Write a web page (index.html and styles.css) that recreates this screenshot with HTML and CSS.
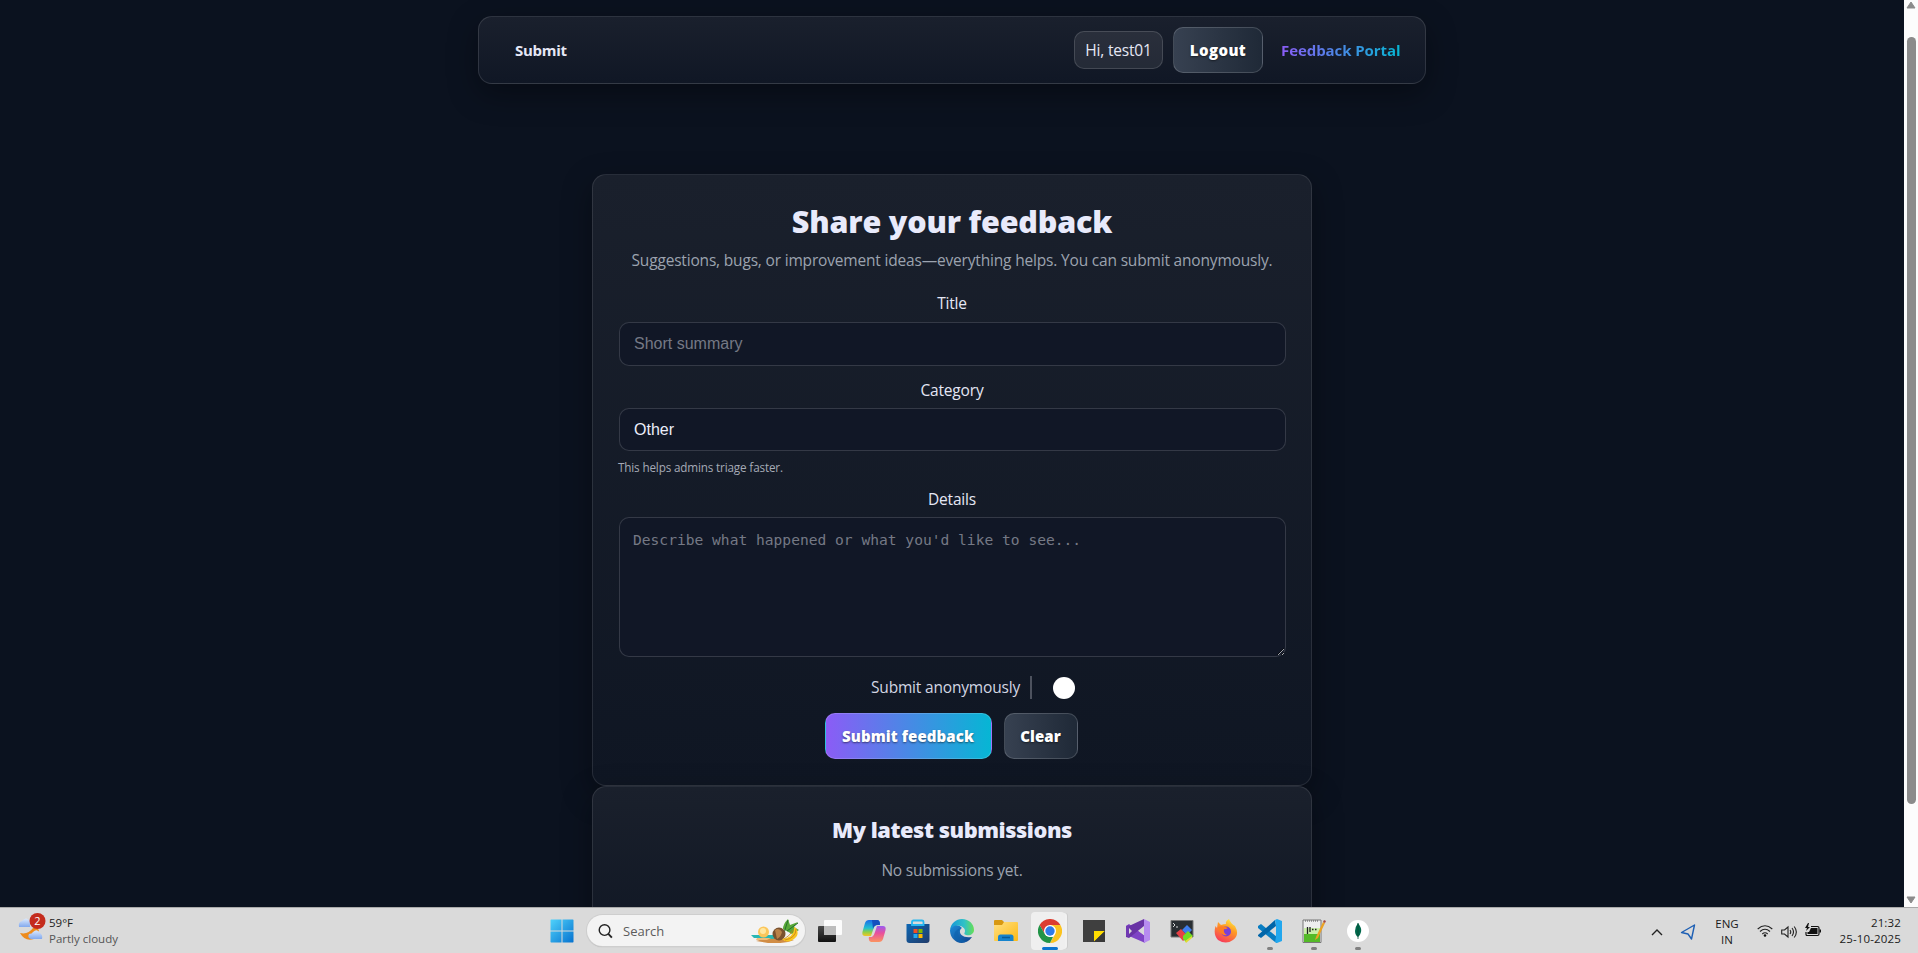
FILE: index.html
```html
<!DOCTYPE html>
<html lang="en">
<head>
<meta charset="utf-8">
<title>Feedback Portal</title>
<link rel="stylesheet" href="styles.css">
</head>
<body>
<div class="viewport">
  <div class="page">
    <nav class="nav">
      <a class="nav-link">Submit</a>
      <div class="nav-right">
        <span class="pill">Hi, test01</span>
        <button class="btn secondary logout">Logout</button>
        <a class="brand">Feedback Portal</a>
      </div>
    </nav>
    <main class="main">
      <section class="card form-card">
        <h1 class="heading">Share your feedback</h1>
        <p class="subtitle">Suggestions, bugs, or improvement ideas—everything helps. You can submit anonymously.</p>
        <label class="label l-title">Title</label>
        <input class="field" placeholder="Short summary">
        <label class="label l-category">Category</label>
        <div class="field select">Other</div>
        <p class="hint">This helps admins triage faster.</p>
        <label class="label l-details">Details</label>
        <textarea class="field area" placeholder="Describe what happened or what you'd like to see..."></textarea>
        <div class="anon"><span class="anon-text">Submit anonymously</span><span class="divider"></span><span class="knob"></span></div>
        <div class="actions"><button class="btn primary">Submit feedback</button><button class="btn secondary clear">Clear</button></div>
      </section>
      <section class="card list-card">
        <h2 class="subheading">My latest submissions</h2>
        <p class="empty">No submissions yet.</p>
      </section>
    </main>
  </div>
  <div class="scrollbar">
    <svg class="arrow" viewBox="0 0 10 8"><path d="M5 1 9 7H1z" fill="#8b8b8b" stroke="#8b8b8b" stroke-linejoin="round"/></svg>
    <span class="thumb"></span>
    <svg class="arrow" viewBox="0 0 10 8"><path d="M5 7 9 1H1z" fill="#8b8b8b" stroke="#8b8b8b" stroke-linejoin="round"/></svg>
  </div>
</div>
<footer class="taskbar">
  <div class="weather">
    <svg class="weather-icon" viewBox="0 0 28 30">
      <defs><linearGradient id="cl" x2="0" y2="1"><stop stop-color="#dce9fc"/><stop offset="1" stop-color="#82a9ee"/></linearGradient></defs>
      <path d="M4 14H1Q0 9 4 8Q8 3 12 8V14z" fill="url(#cl)"/>
      <path d="M2 20Q10 22 15 15Q20 14 21 18L16 26Q7 29 2 20z" fill="#ee8b1c"/>
      <path d="M13 26Q9 25 11 21Q14 21 15 19Q19 15 22 20Q25 22 24 26z" fill="url(#cl)"/>
      <circle cx="19.500" cy="8" r="8" fill="#c42b1c"/>
      <text x="19.500" y="12" text-anchor="middle" class="badge-num">2</text>
    </svg>
    <div class="weather-text"><span class="temp">59°F</span><span class="cond">Partly cloudy</span></div>
  </div>
  <div class="center">
    <div class="app start">
      <svg viewBox="0 0 24 24"><defs><linearGradient id="win" x2="1" y2="1"><stop stop-color="#4fd2fb"/><stop offset="1" stop-color="#0672cf"/></linearGradient></defs><path fill="url(#win)" d="M1 .5H11.500V11.500H.5V1zM12.500 .5H23L23.500 1V11.500H12.500zM.5 12.500H11.500V23.500H1L.5 23zM12.500 12.500H23.500V23L23 23.500H12.500z"/></svg>
    </div>
    <div class="search">
      <svg class="lens" viewBox="0 0 16 16"><circle cx="7" cy="7" r="5.700" fill="none" stroke="#222" stroke-width="1.500"/><path d="m11 11 3.800 4" stroke="#222" stroke-width="2"/></svg>
      <span class="search-text">Search</span>
      <svg class="fruit" viewBox="0 0 50 24">
        <path d="M0 16H24L28 22H12L15 19H3z" fill="#29b7b4"/>
        <circle cx="12.500" cy="13" r="5.500" fill="#fbc65b"/><circle cx="12" cy="12" r="3" fill="#ffe7a0"/>
        <path d="M5 22Q18 18 43 21Q34 25 17 24z" fill="#d18d45"/><path d="M6 19H20L16 21H5z" fill="#efbd78"/>
        <path d="M32 10Q32 5 37 0L39 6 47 3 43 8 48 11 41 15z" fill="#58a838"/><path d="m33 14 4-13M36 12 47 4" stroke="#25712c"/>
        <circle cx="28" cy="15" r="6.500" fill="#79512e"/><path d="M24 11Q28 8 31 13Q30 18 26 20" fill="#b98148"/>
        <path d="M43 8Q44 18 31 20Q36 25 43 20Q49 16 45 9z" fill="#f8c421"/><path d="M45 10Q45 19 34 21M42 11Q39 17 33 20" fill="none" stroke="#c68213" stroke-width=".8"/>
      </svg>
    </div>
    <div class="app"><svg viewBox="0 0 24 24"><defs><linearGradient id="tv" x2="0" y2="1"><stop stop-color="#494949"/><stop offset="1" stop-color="#111"/></linearGradient></defs><rect y="7" width="18" height="16" rx="1" fill="url(#tv)"/><rect x="6" y="1" width="18" height="15" rx="1" fill="#fff" opacity=".9"/><path d="M6 7H18V16H6z" fill="#bdbdbd"/></svg></div>
    <div class="app"><svg viewBox="0 0 24 24">
      <defs><linearGradient id="ca" x2="0" y2="1"><stop stop-color="#1b6be8"/><stop offset=".5" stop-color="#21bfd2"/><stop offset=".75" stop-color="#8fd048"/><stop offset="1" stop-color="#f4c425"/></linearGradient><linearGradient id="cb" x2="0" y2="1"><stop stop-color="#9a5bf0"/><stop offset=".45" stop-color="#e9509c"/><stop offset="1" stop-color="#fb9460"/></linearGradient></defs>
      <path d="M7 1H15Q18 1 18 5L14 6Q12 7 11 11L9 17H3Q-1 17 1 11L3 4Q4 1 7 1z" fill="url(#ca)"/>
      <path d="M17 23H9Q6 22 7 18L10 18Q12 17 13 13L15 7H21Q25 7 23 13L21 20Q20 23 17 23z" fill="url(#cb)"/><path d="M10 1H15Q18 1 18 6H16Q12 6 11 10z" fill="#1550be"/></svg></div>
    <div class="app"><svg viewBox="0 0 24 24"><defs><linearGradient id="st" x2="1" y2="1"><stop stop-color="#0c67b4"/><stop offset="1" stop-color="#213b69"/></linearGradient></defs><path d="M.5 5H23.500V21Q23.500 24 20.500 24H3.500Q.5 24 .5 21z" fill="url(#st)"/><path d="M6 6V3Q6 1.500 7.500 1.500H16Q17.500 1.500 17.500 3V6z" fill="none" stroke="#27b8f0" stroke-width="1.800"/><path d="M7.500 10H11.500V14H7.500z" fill="#f25022"/><path d="M12.500 10H16.500V14H12.500z" fill="#7fba00"/><path d="M7.500 15H11.500V19H7.500z" fill="#20a9ef"/><path d="M12.500 15H16.500V19H12.500z" fill="#ffb900"/></svg></div>
    <div class="app"><svg viewBox="0 0 24 24"><defs><linearGradient id="ed" x2="1"><stop stop-color="#1597d8"/><stop offset=".6" stop-color="#2fc1c6"/><stop offset="1" stop-color="#67df54"/></linearGradient><linearGradient id="ee" x2="1" y2="1"><stop stop-color="#1c8bd8"/><stop offset="1" stop-color="#123f88"/></linearGradient></defs><path d="M0 11C1 4 6 0 12 0C19 0 24 5 24 11C24 15 20 17 16 16C13 15 15 14 15 12C15 8 10 6 6 7Q2 8 0 11z" fill="url(#ed)"/><path d="M0 11C2 6 9 5 12 9C8 11 9 20 22 18C18 24 12 25 7 23C2 20 0 16 0 11z" fill="url(#ee)"/><path d="M12 9C6 10 7 22 17 22C12 26 1 22 5 13Q8 9 12 9z" fill="#0d62ad" opacity=".65"/></svg></div>
    <div class="app"><svg viewBox="0 0 24 24"><defs><linearGradient id="fo" x2="1" y2="1"><stop stop-color="#ffe083"/><stop offset="1" stop-color="#fcb914"/></linearGradient></defs><path d="M0 2Q0 1 1 1H8L10 3V7H0z" fill="#d89810"/><path d="M0 6H8L10 3H23Q24 3 24 4V21Q24 22 23 22H1Q0 22 0 21z" fill="url(#fo)"/><path d="M4 22V18Q4 15.500 6.500 15.500H17Q19.500 15.500 19.500 18V22z" fill="#1583cd"/><path d="M8 18.500H16" stroke="#075b99" stroke-width="1.500"/></svg></div>
    <div class="app active"><svg viewBox="0 0 24 24"><path d="M1.600 6A12 12 0 0 1 22.400 6H12L6.800 15z" fill="#dc3d31"/><path d="M22.400 6A12 12 0 0 1 12 24L17.200 15 17.200 9 12 6z" fill="#fcc31e"/><path d="M12 24A12 12 0 0 1 1.600 6L6.800 15Q9 18 12 18L15 18z" fill="#219447"/><circle cx="12" cy="12" r="6" fill="#fff"/><circle cx="12" cy="12" r="4.700" fill="#307be8"/></svg><i class="run wide"></i></div>
    <div class="app"><svg viewBox="0 0 24 24"><path d="M1 1H23V23H1z" fill="#3f3f3f"/><path d="M12 12H23L12 22.500z" fill="#ffdc00"/><path d="M23 12V23H12z" fill="#383838"/></svg></div>
    <div class="app"><svg viewBox="0 0 24 24"><path d="M0 7 3 5 19 17V24L17 23 3 17 0 18z" fill="#7e43c5"/><path d="M0 18 3 19 18 7V0L3 7 0 7z" fill="#6933a5"/><path d="M0 7 3 6V18L0 17z" fill="#7138b3"/><path d="M18 0 24 3V21L18 24z" fill="#b78bf0"/><path d="M3 9 6 12 3 15zM18 8V16L13 12z" fill="#d9d9d9"/></svg></div>
    <div class="app"><svg viewBox="0 0 24 24"><path d="M1 1.500H23V18H1z" fill="#292e32" stroke="#777"/><path d="m3 4 2 2-2 2M6 8H8" fill="none" stroke="#fff" stroke-width=".8"/><path d="m6 14 5-4 4 4 3 4-5 4z" fill="#e64045"/><path d="m12 11 5-5 5 5-5 5z" fill="#3e7dec"/><path d="m13 17 5-5 5 5-7 6-3-3z" fill="#71db23"/><path d="M15 22 22 17V19L16 24z" fill="#e0dc32"/></svg></div>
    <div class="app"><svg viewBox="0 0 24 24"><defs><linearGradient id="ff" x1=".8" x2=".3" y2="1"><stop stop-color="#fff145"/><stop offset=".4" stop-color="#ff9c24"/><stop offset="1" stop-color="#f7385c"/></linearGradient></defs><path d="M4 3 7 6Q10 5 12 5Q11 2 15 0Q17 5 21 7Q26 16 19 21Q12 26 4 21Q-1 16 1.500 7L3 9z" fill="url(#ff)"/><circle cx="12" cy="12.500" r="5" fill="#7840d5"/><path d="M4 8Q9 6 14 9Q11 11 10 10Q9 14 13 16Q8 17 5 12z" fill="#ff7d23"/></svg></div>
    <div class="app"><svg viewBox="0 0 24 24"><path d="M0 7 3 5 19 18V24L17 23 0 9z" fill="#087dc2"/><path d="M0 16 17 1 18 7 3 19 0 17z" fill="#0065a9"/><path d="M17 1 19 0 24 2V22L19 24 17 23 18 18V6z" fill="#22a7ee"/></svg><i class="run"></i></div>
    <div class="app"><svg viewBox="0 0 24 24"><path d="M1 1H19V23.500H1z" fill="#eee" stroke="#777"/><path d="M2 9H18V23H2z" fill="#c9efa7"/><path d="M2 15H18V23H2z" fill="#54ba27"/><path d="M3 2H17" stroke="#555" stroke-dasharray="1 1"/><path d="M5.500 8V15M8 8V13M10 10.500H11.500M13 10.500H14.500" stroke="#222" stroke-width="1.300"/><path d="m14 18 7-15 2 1-7 15-3 2z" fill="#eba223"/><path d="m21 3 1-2 2 1-1 2z" fill="#a44944"/></svg><i class="run"></i></div>
    <div class="app"><svg viewBox="0 0 24 24"><circle cx="12" cy="12" r="11" fill="#fff"/><path d="M12 4Q16 9 15 13Q14 17 12 18Q9 16 9 12Q9 8 12 4z" fill="#00694c"/><path d="M12 4V20" stroke="#064b38" stroke-width=".8"/></svg><i class="run"></i></div>
  </div>
  <div class="tray">
    <svg class="chev" viewBox="0 0 12 8"><path d="m1 7 5-5 5 5" fill="none" stroke="#222" stroke-width="1.400"/></svg>
    <svg class="loc" viewBox="0 0 16 16"><path d="M14.500 1 1.500 8.500 8 10 11.500 15z" fill="none" stroke="#1d5fb4" stroke-width="1.400" stroke-linejoin="round"/></svg>
    <div class="lang"><span>ENG</span><span>IN</span></div>
    <svg class="wifi" viewBox="0 0 16 14"><path d="M.7 5Q8-1.500 15.300 5M3 7.500Q8 3 13 7.500M5.300 10Q8 7.500 10.700 10" fill="none" stroke="#222" stroke-width="1.100"/><circle cx="8" cy="11.500" r="1.300" fill="#111"/></svg>
    <svg class="sound" viewBox="0 0 17 14"><path d="M.7 5H3.500L7 2V12L3.500 9H.7zM9 5Q10.500 7 9 9M11 3Q14 7 11 11M13.200 1.500Q17.500 7 13.200 12.500" fill="none" stroke="#222" stroke-width="1.100"/></svg>
    <svg class="batt" viewBox="0 0 17 14"><path d="M6 3.500H12.500Q14 3.500 14 5V11Q14 12.500 12.500 12.500H2Q1 12.500 1 11V9" fill="none" stroke="#111" stroke-width="1.200"/><path d="M6 5H12.500V11H2.500V9H4z" fill="#111"/><path d="M14.500 6.500H16V9.500H14.500z" fill="#111"/><path d="m3 0-3 5H2L1 8 5 4H3L4 0z" fill="#111"/></svg>
    <div class="clock"><span class="time">21:32</span><span class="date">25-10-2025</span></div>
  </div>
</footer>
</body>
</html>
```
FILE: styles.css
```css
* { box-sizing: border-box; }
body { margin: 0; height: 953px; overflow: hidden; display: flex; flex-direction: column; background: #0b1220; color: #e5e7f5; font-family: "Open Sans", "Noto Sans", sans-serif; font-size: 15.500px; letter-spacing: -.18px; }
.viewport { height: 907px; flex: none; display: flex; overflow: hidden; }
.page { flex: 1; padding-top: 16px; background: #0b121f; overflow: hidden; }
.nav { width: 948px; height: 68px; margin: 0 auto; padding: 0 25px 0 36px; display: flex; align-items: center; justify-content: space-between; border: 1px solid rgba(255,255,255,.12); border-radius: 14px; background: linear-gradient(180deg, #1a202d, #101725); box-shadow: 0 10px 30px rgba(0,0,0,.35); }
.nav-link { font-weight: 700; font-size: 15px; letter-spacing: -.3px; }
.nav-right { display: flex; align-items: center; }
.pill { width: 89px; height: 38px; display: flex; align-items: center; justify-content: center; border: 1px solid rgba(255,255,255,.14); border-radius: 10px; background: rgba(255,255,255,.08); }
.btn { height: 46px; padding: 0; border: 1px solid rgba(255,255,255,.16); border-radius: 10px; color: #fff; font: 800 15px "Open Sans", sans-serif; letter-spacing: .1px; text-shadow: 0 1px 2px rgba(0,0,0,.5); }
.secondary { background: linear-gradient(90deg, #374151, #1f2937); }
.logout { width: 90px; margin: 0 18px 0 10px; letter-spacing: .4px; }
.brand { width: 119px; font-size: 15px; font-weight: 700; letter-spacing: -.08px; white-space: nowrap; background: linear-gradient(90deg, #8b5cf6, #06b6d4); background-clip: text; color: transparent; }
.main { width: 720px; margin: 90px auto 0; }
.card { border: 1px solid rgba(255,255,255,.1); border-radius: 14px; text-align: center; background: linear-gradient(180deg, #1a202c, #0f1623); box-shadow: 0 10px 30px rgba(0,0,0,.35); padding: 0 26px; }
.form-card { height: 612px; }
.heading { margin: 0; padding-top: 25px; font-size: 30.500px; font-weight: 800; line-height: 42px; color: #e8eafb; }
.subtitle { margin: 6px -10px 0; line-height: 24px; color: #9ca3af; white-space: nowrap; }
.label { display: block; line-height: 24px; }
.l-title { margin: 19px 0 7px; }
.field { display: block; width: 667px; height: 44px; margin: 0; padding: 0 14px; border: 1px solid rgba(255,255,255,.15); border-radius: 10px; outline: none; background: #111726; color: #eceefa; font: 16px "Liberation Sans", Arial, sans-serif; letter-spacing: 0; text-align: left; }
.field::placeholder { color: #757985; opacity: 1; }
.l-category { margin: 12px 0 6px; }
.select { height: 43px; line-height: 41px; }
.hint { margin: 7px 0 0 -1px; font-size: 11.700px; letter-spacing: -.15px; line-height: 18px; text-align: left; color: #a5aab6; }
.l-details { margin: 11px 0 6px; }
.area { height: 140px; padding: 12px 13px; resize: vertical; font: 14.600px/20px "DejaVu Sans Mono", monospace; }
.anon { height: 24px; margin-top: 18px; padding-left: 252px; display: flex; align-items: center; }
.anon-text { width: 149px; white-space: nowrap; color: #d3d6e3; }
.divider { width: 2px; height: 23px; margin-left: 10px; background: #4d525e; }
.knob { width: 22px; height: 22px; margin: 2px 0 0 21px; border-radius: 50%; background: #fff; }
.actions { display: flex; justify-content: center; gap: 12px; margin: 14px 2px 0 0; }
.primary { width: 167px; background: linear-gradient(90deg, #8b5cf6, #06b6d4); }
.clear { width: 74px; }
.list-card { height: 180px; }
.subheading { margin: 0; padding-top: 27px; font-size: 21.800px; font-weight: 800; letter-spacing: -.45px; line-height: 32px; color: #e8eafb; }
.empty { margin: 12px 0 0; line-height: 24px; color: #9ca3af; }
.scrollbar { width: 14px; background: #fcfcfc; display: flex; flex-direction: column; align-items: center; justify-content: space-between; padding: 1px 0 3px; }
.arrow { width: 10px; height: 8px; }
.thumb { width: 9px; height: 767px; margin: -65px 0 0; border-radius: 5px; background: #8b8b8b; }
.taskbar { height: 46px; flex: none; display: grid; grid-template-columns: 540px 840px 1fr; border-top: 1px solid #aaa; background: #dadada; color: #1b1b1b; font-size: 11.500px; letter-spacing: 0; }
.weather { display: flex; padding: 5px 0 0 18px; }
.weather-icon { width: 28px; height: 30px; }
.badge-num { font: 11px "Open Sans", sans-serif; fill: #fff; }
.weather-text { display: flex; flex-direction: column; line-height: 16px; margin-left: 3px; padding-top: 2px; }
.cond { color: #555; }
.center { display: flex; }
.app { width: 44px; height: 45px; padding: 11px 10px 0; position: relative; flex: none; }
.app svg { display: block; width: 24px; height: 24px; }
.run { position: absolute; left: 19px; bottom: 3px; width: 6px; height: 3px; border-radius: 2px; background: #808080; }
.run.wide { left: 14px; width: 16px; background: #0b74cf; }
.active::before { content: ""; position: absolute; left: 3px; top: 4px; width: 34px; height: 38px; border-radius: 4px; background: #efefef; box-shadow: 3px 0 0 -1px #f1f1f1, 4px 0 0 -1px #ccc; }
.active svg { position: relative; }
.search { width: 218px; height: 31px; margin: 7px 3px 0; padding: 0 4px 0 11px; display: flex; align-items: center; border-radius: 16px; background: #f3f3f3; box-shadow: 0 0 0 1px #cecece, 0 1px 1px #aaa; }
.lens { width: 15px; height: 16px; }
.search-text { flex: 1; margin-left: 10px; font-size: 13px; color: #5c5c5c; }
.fruit { width: 50px; height: 24px; }
.tray { display: flex; align-items: flex-start; padding-left: 271px; }
.chev { width: 12px; height: 8px; margin: 20px 0 0; }
.loc { width: 16px; height: 16px; margin: 16px 0 0 17px; }
.lang { width: 30px; display: flex; flex-direction: column; align-items: center; margin: 8px 0 0 16px; line-height: 16px; }
.wifi { width: 16px; height: 14px; margin: 16px 0 0 15px; }
.sound { width: 17px; height: 14px; margin: 17px 0 0 8px; }
.batt { width: 17px; height: 14px; margin: 15px 0 0 7px; }
.clock { flex: 1; margin: 7px 17px 0 0; display: flex; flex-direction: column; align-items: flex-end; line-height: 16px; letter-spacing: .15px; }
```
